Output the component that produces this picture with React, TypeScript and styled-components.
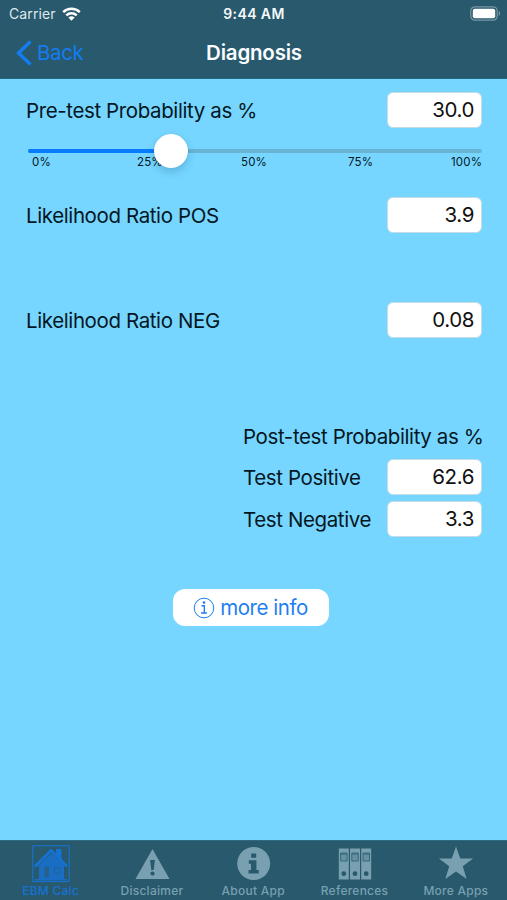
import React from "react";
import styled, { createGlobalStyle } from "styled-components";

const GlobalStyle = createGlobalStyle`
  * { box-sizing: border-box; }
  body { margin: 0; background: #76d6ff; }
`;

const Screen = styled.div`
  width: 507px;
  height: 900px;
  display: flex;
  flex-direction: column;
  overflow: hidden;
  background: #76d6ff;
  color: #04161f;
  font-family: Inter, "Liberation Sans", sans-serif;
  font-size: 20.5px;
  letter-spacing: -0.39px;
  white-space: nowrap;
`;

const Header = styled.header`
  height: 79px;
  background: #29596c;
  border-bottom: 1px solid #28647c;
  flex: none;
`;

const StatusBar = styled.div`
  height: 27px;
  padding: 0 6px 0 9px;
  display: grid;
  grid-template-columns: 1fr auto 1fr;
  align-items: center;
  color: #f4f8fa;
  font-size: 14px;
  letter-spacing: 0.1px;
`;

const Carrier = styled.div`
  display: flex;
  align-items: center;
  gap: 6px;
  color: #dfe8ec;
`;

const Clock = styled.div`
  margin-right: 2px;
  font-weight: 600;
  letter-spacing: 0.4px;
`;

const Battery = styled.svg`
  justify-self: end;
`;

const NavBar = styled.div`
  height: 51px;
  padding: 0 15px 0 16px;
  display: grid;
  grid-template-columns: 1fr auto 1fr;
  align-items: center;
`;

const BackButton = styled.button`
  display: flex;
  align-items: center;
  gap: 5px;
  padding: 0;
  border: 0;
  background: none;
  color: #137df0;
  font: inherit;
  letter-spacing: -0.35px;
`;

const Title = styled.h1`
  margin: 0;
  font-size: 20.5px;
  font-weight: 600;
  letter-spacing: -0.2px;
  color: #fafdff;
`;

const Content = styled.main`
  flex: 1;
  padding: 13px 25px 0 26px;
  display: flex;
  flex-direction: column;
`;

const FieldRow = styled.div<{ $gap?: number }>`
  height: 36px;
  margin-bottom: ${(p) => p.$gap ?? 0}px;
  display: flex;
  justify-content: space-between;
  align-items: flex-start;
`;

const Label = styled.label`
  line-height: 38px;
`;

const ValueBox = styled.output`
  width: 95px;
  height: 36px;
  padding-right: 7px;
  border: 1px solid #c3dce6;
  border-radius: 6px;
  background: #fff;
  color: #111;
  line-height: 33px;
  text-align: right;
`;

const Slider = styled.div`
  height: 69px;
  padding: 21px 0 0 2px;
`;

const Track = styled.div`
  position: relative;
  height: 4px;
  border-radius: 2px;
  background: #67b4d5;
`;

const Fill = styled.div`
  height: 4px;
  border-radius: 2px;
  background: #087bff;
`;

const Knob = styled.div`
  position: absolute;
  top: -15px;
  width: 34px;
  height: 34px;
  margin-left: -17px;
  border-radius: 50%;
  background: #fff;
  box-shadow: 0 4px 9px rgba(0, 50, 80, 0.2), 0 0 1px rgba(0, 50, 80, 0.2);
`;

const Ticks = styled.div`
  padding: 2px 0 0 4px;
  display: grid;
  grid-template-columns: 105px 104px 107px 103px auto;
  font-size: 11.5px;
  line-height: 15px;
  letter-spacing: 0.15px;
`;

const Results = styled.section`
  width: 239px;
  margin-left: auto;
  display: flex;
  flex-direction: column;
`;

const ResultsTitle = styled.h2`
  height: 36px;
  margin: 0 0 5px;
  font-size: inherit;
  font-weight: 400;
  line-height: 37px;
`;

const InfoButton = styled.button`
  width: 156px;
  height: 37px;
  margin: 52px 0 0 147px;
  padding: 0 1px 0 0;
  display: flex;
  align-items: center;
  justify-content: center;
  gap: 5px;
  border: 0;
  border-radius: 12px;
  background: #fff;
  color: #1e7ff0;
  font: inherit;
  letter-spacing: -0.45px;
`;

const TabBar = styled.nav`
  height: 60px;
  flex: none;
  display: grid;
  grid-template-columns: repeat(5, 101.3px);
  background: #29596c;
  border-top: 1px solid #2f6a82;
`;

const Tab = styled.a<{ $active?: boolean }>`
  padding-top: 4px;
  display: flex;
  flex-direction: column;
  align-items: center;
  color: ${(p) => (p.$active ? "#1672d2" : "#78a0b1")};
  font-size: 12px;
  font-weight: 500;
  line-height: 15px;
  letter-spacing: 0.25px;
`;

const TabIcon = styled.svg`
  width: 38px;
  height: 38px;
  flex: none;
`;

const House = () => (
  <TabIcon viewBox="0 0 38 38">
    <rect x="0.8" y="0.8" width="36.4" height="35.8" fill="none" stroke="currentColor" strokeWidth="1.1" />
    <path d="M7 20 19 8.5 32 20V34H35v1.5H3V34h4Z" fill="currentColor" opacity=".85" />
    <path d="M3 21.5 19 5.5 35 21.5" fill="none" stroke="currentColor" strokeWidth="3" />
    <path d="M24 4h5.5v11L24 10Z" fill="currentColor" />
    <path d="M12.5 22h4.5v10h-4.5Z" fill="#27608a" />
    <path d="M22.5 22.5h5.5v6h-5.5Z" fill="none" stroke="#27608a" strokeWidth=".8" />
  </TabIcon>
);

const Warning = () => (
  <TabIcon viewBox="0 0 38 38">
    <path d="M19.5 4 36.5 34H2.5Z" fill="currentColor" />
    <path d="M17.1 15h4.8l-1.2 10h-2.4Z" fill="#29596c" />
    <circle cx="19.5" cy="28.6" r="2.1" fill="#29596c" />
  </TabIcon>
);

const About = () => (
  <TabIcon viewBox="0 0 38 38">
    <circle cx="19.7" cy="18.5" r="16.5" fill="currentColor" />
    <path d="M17.2 8.5h5v4.3h-5ZM14.8 15.3h7.6V25h2.3v3.4H14.5V25H17v-6.3h-2.2Z" fill="#29596c" />
  </TabIcon>
);

const Binders = () => (
  <TabIcon viewBox="0 0 38 38">
    {[2.8, 14, 25.2].map((x) => (
      <g key={x} transform={`translate(${x} 3.5)`}>
        <path d="M0 0h10v31H0Z" fill="currentColor" />
        <path d="M1.8 4.5h6.5v8H1.8Z" fill="#6790a2" stroke="#386a7d" strokeWidth="1" />
        <path d="M1.8 5.5h6.5" fill="none" stroke="#386a7d" strokeWidth="1.2" />
        <circle cx="5" cy="25.2" r="2.4" fill="#29596c" />
      </g>
    ))}
  </TabIcon>
);

const Star = () => (
  <TabIcon viewBox="0 0 38 38">
    <path d="m19 1.5 4.2 11.9 12.9.1-10.3 7.8 3.8 12.8L19 26.5 8.4 34.1l3.8-12.8L1.9 13.5l12.9-.1Z" fill="currentColor" />
  </TabIcon>
);

const tabs = [
  { label: "EBM Calc", Icon: House },
  { label: "Disclaimer", Icon: Warning },
  { label: "About App", Icon: About },
  { label: "References", Icon: Binders },
  { label: "More Apps", Icon: Star },
];

export default function App() {
  const probability = 30;
  return (
    <Screen>
      <GlobalStyle />
      <Header>
        <StatusBar>
          <Carrier>
            Carrier
            <svg width="19" height="14" viewBox="0 0 19 14">
              <path d="M1.2 5.2a12 12 0 0 1 16.6 0M4.3 8.3a7.6 7.6 0 0 1 10.4 0" fill="none" stroke="#fff" strokeWidth="2.5" />
              <path d="M6.4 10.6a4.5 4.5 0 0 1 6.2 0L9.5 13.8Z" fill="#fff" />
            </svg>
          </Carrier>
          <Clock>9:44 AM</Clock>
          <Battery width="31" height="15" viewBox="0 0 31 15">
            <rect x="0.8" y="0.8" width="26.4" height="13.4" rx="4" fill="none" stroke="#7897a4" strokeWidth="1.2" />
            <rect x="2.8" y="2.8" width="22.4" height="9.4" rx="2" fill="#fff" />
            <path d="M28.7 5c2 1 2 4 0 5Z" fill="#7897a4" />
          </Battery>
        </StatusBar>
        <NavBar>
          <BackButton>
            <svg width="16" height="26" viewBox="0 0 16 26">
              <path d="M14.5 1.5 2.5 13l12 11.5" fill="none" stroke="currentColor" strokeWidth="3.4" />
            </svg>
            Back
          </BackButton>
          <Title>Diagnosis</Title>
        </NavBar>
      </Header>
      <Content>
        <FieldRow>
          <Label>Pre-test Probability as %</Label>
          <ValueBox>30.0</ValueBox>
        </FieldRow>
        <Slider>
          <Track>
            <Fill style={{ width: `${probability}%` }} />
            <Knob style={{ left: `${probability + 1.6}%` }} />
          </Track>
          <Ticks>
            {["0%", "25%", "50%", "75%", "100%"].map((t) => (
              <span key={t}>{t}</span>
            ))}
          </Ticks>
        </Slider>
        <FieldRow $gap={69}>
          <Label>Likelihood Ratio POS</Label>
          <ValueBox>3.9</ValueBox>
        </FieldRow>
        <FieldRow $gap={80}>
          <Label>Likelihood Ratio NEG</Label>
          <ValueBox>0.08</ValueBox>
        </FieldRow>
        <Results>
          <ResultsTitle>Post-test Probability as %</ResultsTitle>
          <FieldRow $gap={6}>
            <Label>Test Positive</Label>
            <ValueBox>62.6</ValueBox>
          </FieldRow>
          <FieldRow>
            <Label>Test Negative</Label>
            <ValueBox>3.3</ValueBox>
          </FieldRow>
        </Results>
        <InfoButton>
          <svg width="22" height="22" viewBox="0 0 22 22">
            <circle cx="11" cy="11" r="9.8" fill="none" stroke="currentColor" strokeWidth="1" />
            <path d="M8.5 8.8h2.8v7M8 16h6" fill="none" stroke="currentColor" strokeWidth="1.4" />
            <circle cx="11" cy="5.6" r="1.3" fill="currentColor" />
          </svg>
          more info
        </InfoButton>
      </Content>
      <TabBar>
        {tabs.map(({ label, Icon }, i) => (
          <Tab key={label} $active={i === 0}>
            <Icon />
            {label}
          </Tab>
        ))}
      </TabBar>
    </Screen>
  );
}
